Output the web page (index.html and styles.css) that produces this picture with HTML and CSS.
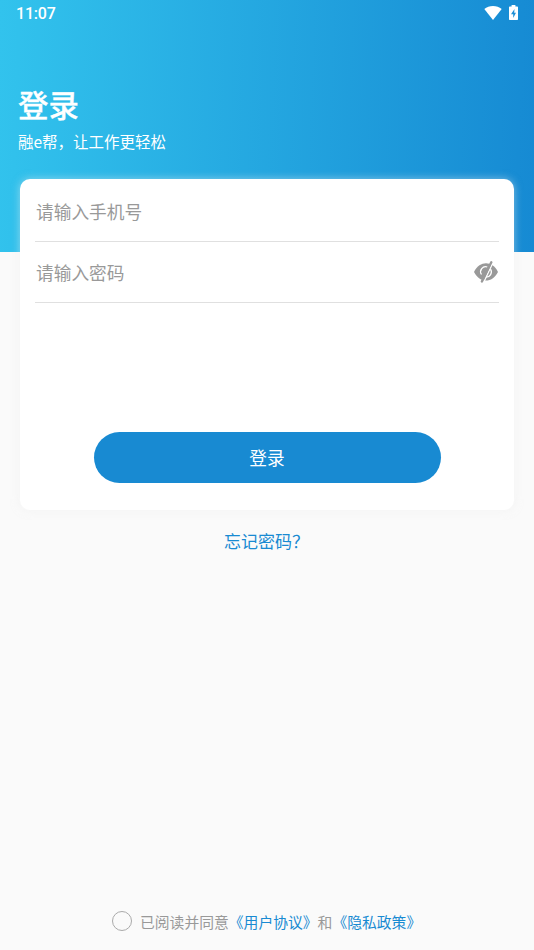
FILE: index.html
```html
<!DOCTYPE html>
<html lang="zh-CN">
<head>
<meta charset="utf-8">
<title>登录</title>
<link rel="stylesheet" href="styles.css">
</head>
<body>
<div class="screen">
  <header class="hero">
    <div class="status">
      <span class="time">11:07</span>
      <span class="status-icons">
        <svg class="wifi" viewBox="0 0 18 14"><path d="M9 14 0.3 3.1C2.7 1 5.700 0 9 0s6.300 1 8.700 3.100z" fill="#fff"/></svg>
        <svg class="battery" viewBox="0 0 9 15"><path d="M2.600 0h3.800v1.500H8c.6 0 1 .4 1 1V14c0 .6-.4 1-1 1H1c-.6 0-1-.4-1-1V2.500c0-.6.4-1 1-1h1.600z" fill="#fff"/><path d="M5.500 4 2 9.200h2.200V13L7 7.700H5.200z" fill="#1d8fd6"/></svg>
      </span>
    </div>
    <h1 class="title">登录</h1>
    <p class="subtitle">融e帮，让工作更轻松</p>
  </header>
  <main class="card">
    <div class="field"><span>请输入手机号</span></div>
    <div class="field">
      <span>请输入密码</span>
      <svg class="eye" viewBox="0 0 26 22">
        <path d="M1 11C4 5 8.500 2.300 13 2.300S22 5 25 11c-3 6-7.500 8.500-12 8.500S4 17 1 11z" fill="#999"/>
        <path d="M14.300 6A5 5 0 0 0 8.500 13.500" fill="none" stroke="#fff" stroke-width="1.300"/>
        <path d="M17.500 8.200a5.200 5.200 0 0 1-4.700 8" fill="none" stroke="#fff" stroke-width="1.300"/>
        <path d="M20.200 1 10.800 21" stroke="#fff" stroke-width="1.500"/>
        <path d="M18.300 1.300 8.900 20.500" stroke="#999" stroke-width="2.400" stroke-linecap="round"/>
      </svg>
    </div>
    <button class="submit" type="button">登录</button>
  </main>
  <a class="forgot">忘记密码？</a>
  <footer class="agreement">
    <span class="radio"></span>
    <span class="terms">已阅读并同意<a>《用户协议》</a>和<a>《隐私政策》</a></span>
  </footer>
</div>
</body>
</html>
```

FILE: styles.css
```css
* { box-sizing: border-box; }
body {
  margin: 0;
  font-family: "Noto Sans CJK SC", sans-serif;
  background: #fafafa;
}
.screen {
  height: 950px;
  display: flex;
  flex-direction: column;
  overflow: hidden;
}
.hero {
  flex: none;
  height: 251.500px;
  color: #fff;
  background: linear-gradient(92deg, #32c3ed, #168ad3);
}
.status {
  height: 28px;
  padding: 0 16px;
  display: flex;
  align-items: center;
  justify-content: space-between;
}
.time {
  font: 500 16px/28px Roboto, sans-serif;
  letter-spacing: -0.200px;
}
.status-icons {
  display: flex;
  align-items: center;
  gap: 7px;
  margin-top: -3px;
}
.wifi { width: 18px; height: 14px; }
.battery { width: 9px; height: 15px; }
.title {
  margin: 54px 0 0 18px;
  font-size: 30.400px;
  line-height: 44px;
  font-weight: 500;
  -webkit-text-stroke: 0.300px #fff;
}
.subtitle {
  margin: 3px 0 0 18px;
  font-size: 15.500px;
  line-height: 24px;
}
.card {
  flex: none;
  height: 331px;
  margin: -72.500px 20px 0;
  padding: 1px 15px 0;
  display: flex;
  flex-direction: column;
  border-radius: 10px;
  background: #fff;
  box-shadow: 0 0 9px rgba(240, 240, 240, 0.500);
}
.field {
  height: 61px;
  padding: 0 0 1px 1px;
  border-bottom: 1px solid #e0e0e0;
  display: flex;
  align-items: center;
  justify-content: space-between;
  color: #999;
  font-size: 17.700px;
}
.field:first-child { height: 62px; padding: 1px 0 0 1px; }
.eye { width: 26px; height: 22px; }
.submit {
  align-self: center;
  width: 347px;
  height: 51px;
  margin-top: 129px;
  padding: 0 0 2px;
  border: 0;
  border-radius: 26px;
  background: #188ad2;
  color: #fff;
  font: 17.700px "Noto Sans CJK SC", sans-serif;
}
.forgot {
  margin: 17px 0 0 224px;
  font-size: 17px;
  line-height: 28px;
  color: #188ad2;
}
.agreement {
  margin: auto 0 16px 112px;
  display: flex;
  align-items: center;
  gap: 8px;
  color: #999;
  font-size: 14.800px;
  line-height: 24px;
}
.radio {
  width: 20px;
  height: 20px;
  margin-top: -2px;
  border: 1px solid #aaa;
  border-radius: 50%;
}
.terms { white-space: nowrap; }
.terms a { color: #188ad2; }
```
